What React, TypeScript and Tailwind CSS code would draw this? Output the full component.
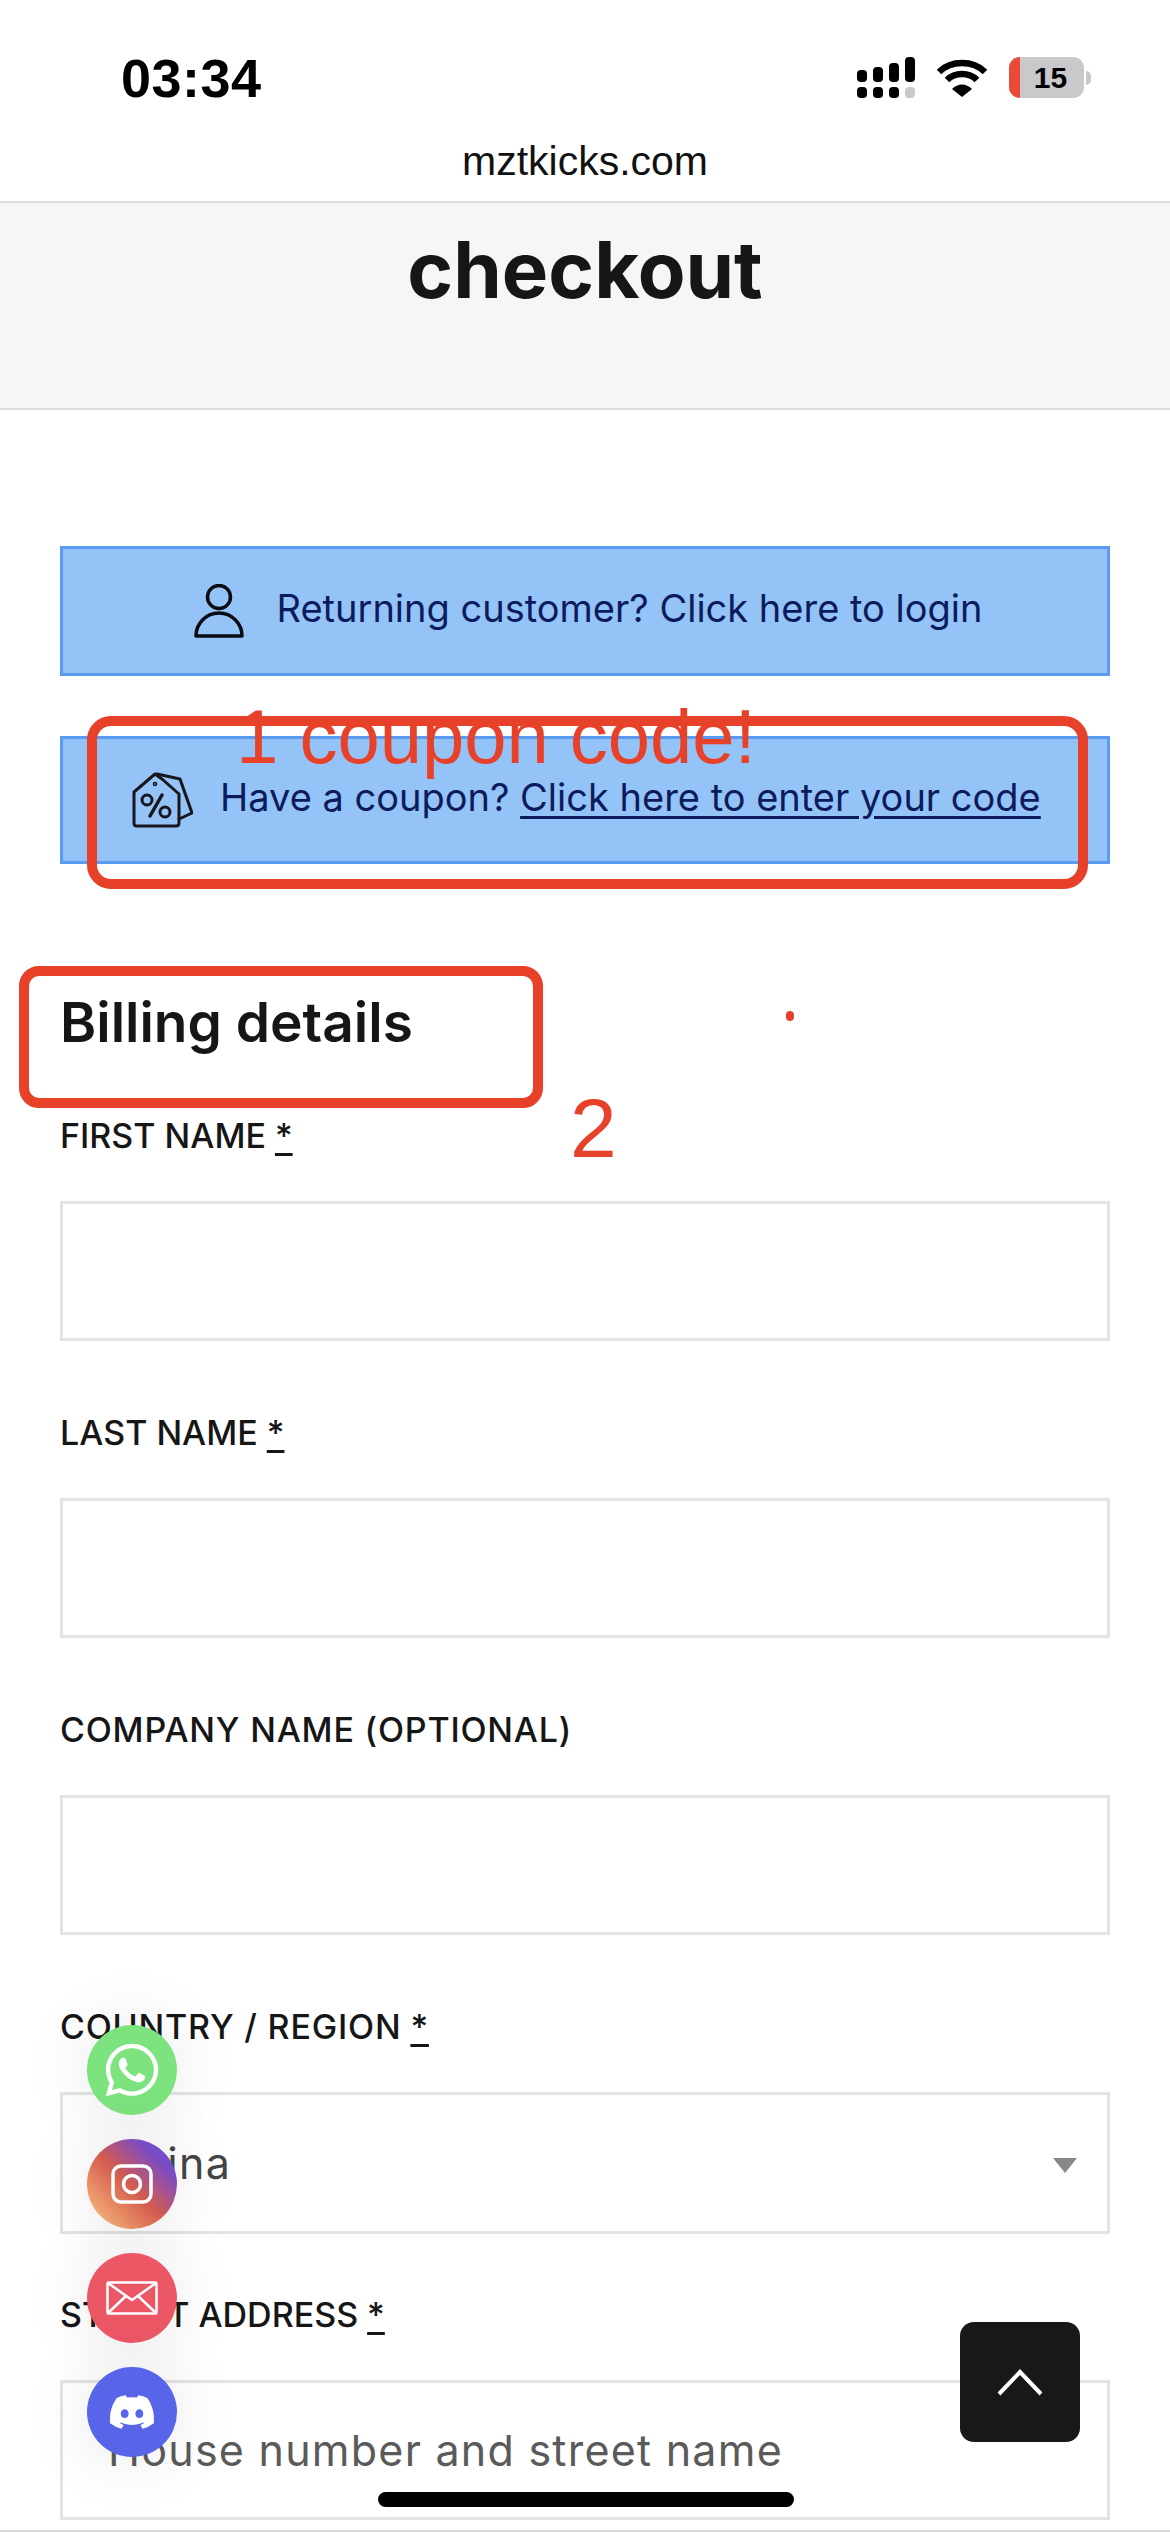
import { FaWhatsapp, FaDiscord } from "react-icons/fa";

const body = "font-['Inter','Noto_Sans',sans-serif]";

function Field({ label, required, tall, wide, children }: { label: string; required?: boolean; tall?: boolean; wide?: boolean; children?: React.ReactNode }) {
  return (
    <div className={tall ? "mb-[59px]" : "mb-[70px]"}>
      <div className={`h-[87px] text-[34px] leading-[44px] font-medium text-[#161616] ${wide ? "tracking-[0.8px]" : ""}`}>
        {label}
        {required && <span className="underline underline-offset-[5px] ml-[9px]">*</span>}
      </div>
      <div className={`relative flex items-center border-[3px] border-[#e3e3e3] pl-[45px] text-[43px] tracking-[1.25px] ${tall ? "h-[142px]" : "h-[140px]"}`}>
        {children}
      </div>
    </div>
  );
}

function StatusIcons() {
  return (
    <div className="flex items-center gap-[22px]">
      <svg width="58" height="41" viewBox="0 0 58 41">
        <rect x="0" y="13" width="10" height="12" rx="4" fill="#000" />
        <rect x="16" y="10" width="10" height="15" rx="4" fill="#000" />
        <rect x="32" y="6" width="10" height="19" rx="4" fill="#000" />
        <rect x="48" y="0" width="10" height="25" rx="4" fill="#000" />
        <rect x="0" y="30" width="10" height="11" rx="4" fill="#000" />
        <rect x="16" y="30" width="10" height="11" rx="4" fill="#000" />
        <rect x="32" y="30" width="10" height="11" rx="4" fill="#000" />
        <rect x="48" y="30" width="10" height="11" rx="4" fill="#c9c9cc" />
      </svg>
      <svg width="50" height="38" viewBox="0 0 50 38">
        <path d="M2 13 C14 1 36 1 48 13" fill="none" stroke="#000" strokeWidth="6.5" />
        <path d="M10 21 C18 13 32 13 40 21" fill="none" stroke="#000" strokeWidth="6.5" />
        <path d="M15 30 C21 24 29 24 35 30 L25 38 Z" fill="#000" />
      </svg>
      <div className="flex items-center">
        <div className="relative w-[75px] h-[41px] rounded-[11px] bg-[#c9c9cc] overflow-hidden flex items-center justify-center">
          <div className="absolute left-0 top-0 bottom-0 w-[11px] bg-[#eb4a36]" />
          <span className="text-[30px] font-bold text-black font-['Liberation_Sans',sans-serif] ml-[8px]">15</span>
        </div>
        <div className="w-[5px] h-[14px] ml-[2px] rounded-r-full bg-[#c9c9cc]" />
      </div>
    </div>
  );
}

export default function App() {
  return (
    <div className={`relative w-[1170px] h-[2532px] overflow-hidden bg-white ${body}`}>
      <div className="h-[145px] pt-[50px] pl-[121px] pr-[79px] flex items-start justify-between">
        <span className="text-[54px] leading-[56px] font-bold text-black font-['Liberation_Sans',sans-serif] tracking-[0.5px]">03:34</span>
        <div className="pt-[7px]">
          <StatusIcons />
        </div>
      </div>
      <div className="h-[56px] text-center text-[41px] leading-[32px] text-[#111] font-['Liberation_Sans',sans-serif]">mztkicks.com</div>

      <div className="h-[209px] bg-[#f6f6f6] border-y-[2px] border-[#dedede] pt-[27px] text-center text-[78px] leading-[80px] font-bold text-[#161616]">
        checkout
      </div>

      <div className="px-[60px] pt-[136px]">
        <div className="h-[130px] flex items-center justify-center pl-[6px] gap-[33px] bg-[#94c3f8] border-[3px] border-[#5a9af0] text-[38px] text-[#0b1b5c]">
          <svg width="50" height="54" viewBox="0 0 50 54" fill="none" stroke="#0b0b12" strokeWidth="3.5">
            <circle cx="25" cy="13" r="11.5" />
            <path d="M2 52 A23 23 0 0 1 48 52 Z" strokeLinejoin="round" />
          </svg>
          <span className="mb-[6px]">Returning customer? Click here to login</span>
        </div>

        <div className="mt-[60px] h-[128px] flex items-center pl-[69px] gap-[27px] bg-[#94c3f8] border-[3px] border-[#5a9af0] text-[38px] text-[#0b1b5c]">
          <svg width="61" height="56" viewBox="0 0 61 56" fill="none" stroke="#16161c" strokeWidth="3" strokeLinejoin="round" strokeLinecap="round">
            <path d="M23 2 L2 20 L2 51 Q2 54 5 54 L44 54 Q47 54 47 51 L47 22 L30 7 Z" />
            <path d="M25 2 L48 7 L60 41 L47 47" />
            <circle cx="23" cy="12" r="0.8" />
            <path d="M30 23 L18 44" strokeWidth="3.5" />
            <circle cx="15" cy="28" r="5" />
            <circle cx="33" cy="40" r="5" />
          </svg>
          <span className="mb-[6px]">
            Have a coupon? <span className="underline underline-offset-[5px]">Click here to enter your code</span>
          </span>
        </div>

        <h2 className="mt-[131px] h-[54px] text-[55px] leading-[54px] font-semibold text-[#161616]">Billing details</h2>

        <div className="mt-[65px]">
          <Field label="FIRST NAME" required />
          <Field label="LAST NAME" required />
          <Field label="COMPANY NAME (OPTIONAL)" wide />
          <Field label="COUNTRY / REGION" required tall wide>
            <span className="text-[#444]">China</span>
            <div className="absolute right-[30px] top-[63px] w-0 h-0 border-x-[12px] border-x-transparent border-t-[15px] border-t-[#888]" />
          </Field>
          <Field label="STREET ADDRESS" required>
            <span className="text-[#5a5a5a]">House number and street name</span>
          </Field>
        </div>
      </div>

      {/* bottom edge of the page */}
      <div className="absolute left-0 right-0 bottom-0 h-[2px] bg-[#d9d9d9]" />
      <div className="absolute left-[378px] top-[2492px] w-[416px] h-[15px] rounded-full bg-black" />

      {/* floating contact buttons */}
      <div className="absolute left-[87px] top-[2025px] flex flex-col gap-[24px]">
        <div className="w-[90px] h-[90px] rounded-full bg-[#7de37e] flex items-center justify-center text-white shadow-[0_0_70px_rgba(0,0,0,0.1)]">
          <FaWhatsapp size={60} />
        </div>
        <div className="w-[90px] h-[90px] rounded-full bg-[linear-gradient(45deg,#f2a873_15%,#d45c4e_48%,#7b4cc4_78%,#5f55d0)] flex items-center justify-center shadow-[0_0_70px_rgba(0,0,0,0.1)]">
          <svg width="42" height="40" viewBox="0 0 42 40" fill="none" stroke="#fff" strokeWidth="3.5">
            <rect x="2" y="2" width="38" height="36" rx="8" />
            <circle cx="21" cy="20" r="8.5" />
          </svg>
        </div>
        <div className="w-[90px] h-[90px] rounded-full bg-[#ec5766] flex items-center justify-center shadow-[0_0_70px_rgba(0,0,0,0.1)]">
          <svg width="52" height="34" viewBox="0 0 52 34" fill="none" stroke="#fff" strokeWidth="2.5">
            <rect x="1.5" y="1.5" width="49" height="31" rx="1" />
            <path d="M2 2 L26 19 L50 2 M2 32 L20 15 M50 32 L32 15" />
          </svg>
        </div>
        <div className="w-[90px] h-[90px] rounded-full bg-[#5865e8] flex items-center justify-center text-white shadow-[0_0_70px_rgba(0,0,0,0.1)]">
          <FaDiscord size={48} />
        </div>
      </div>

      {/* back to top */}
      <div className="absolute left-[960px] top-[2322px] w-[120px] h-[120px] rounded-[14px] bg-[#181818] flex items-center justify-center">
        <svg width="46" height="28" viewBox="0 0 46 28" fill="none" stroke="#fff" strokeWidth="4">
          <path d="M2 26 L23 4 L44 26" />
        </svg>
      </div>

      {/* red markup drawn over the screenshot */}
      <div className="absolute left-[87px] top-[716px] w-[1001px] h-[173px] rounded-[24px] border-[10px] border-[#e8412a]" />
      <div className="absolute left-[19px] top-[966px] w-[524px] h-[142px] rounded-[20px] border-[10px] border-[#e8412a]" />
      <div className="absolute left-[236px] top-[692px] text-[76px] leading-[90px] text-[#e8412a] font-['Liberation_Sans',sans-serif] whitespace-nowrap">1 coupon code!</div>
      <div className="absolute left-[570px] top-[1085px] text-[84px] leading-[86px] text-[#e8412a] font-['Liberation_Sans',sans-serif]">2</div>
      <div className="absolute left-[786px] top-[1011px] w-[8px] h-[10px] rounded-full bg-[#e8412a]" />
    </div>
  );
}
